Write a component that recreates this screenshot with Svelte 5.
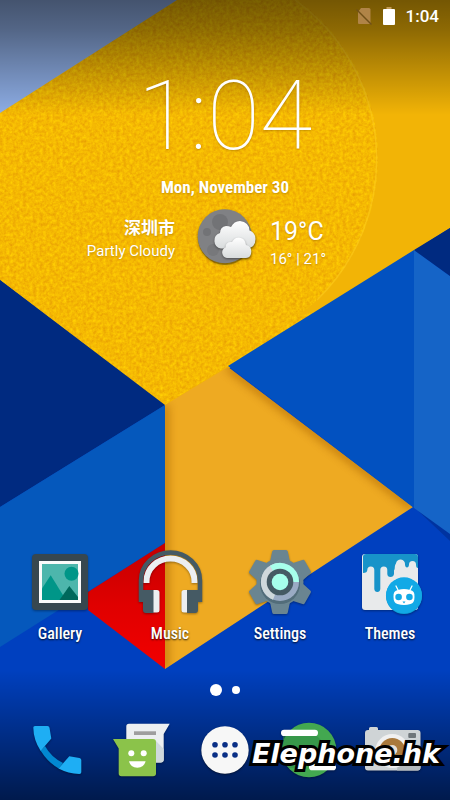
<script lang="ts">
	type Launcher = { id: string; label: string };

	const apps: Launcher[] = [
		{ id: 'gallery', label: 'Gallery' },
		{ id: 'music', label: 'Music' },
		{ id: 'settings', label: 'Settings' },
		{ id: 'themes', label: 'Themes' }
	];

	const dock: Launcher[] = [
		{ id: 'phone', label: 'Phone' },
		{ id: 'messages', label: 'Messages' },
		{ id: 'drawer', label: 'All apps' },
		{ id: 'files', label: 'Files' },
		{ id: 'camera', label: 'Camera' }
	];

	const pages = [0, 1];
	let page = $state(0);

	const time = '1:04';
	const teeth = [0, 60, 120, 180, 240, 300];
	const drawerDots = [22, 32, 42];
</script>

{#snippet icon(id: string)}
	<svg class="icon" viewBox="0 0 64 64" aria-hidden="true">
		{#if id === 'gallery'}
			<rect x="4" y="4" width="56" height="56" rx="4" fill="#37474f" />
			<rect x="11" y="11" width="42" height="42" fill="#fafafa" />
			<rect x="14" y="14" width="36" height="36" fill="#4db6ac" />
			<circle cx="43.5" cy="23.7" r="7" fill="#009688" />
			<path d="M14 38.5 22.7 25.3 38 50H14z" fill="#009688" />
			<path d="M31.5 50 41.3 36 50 47v3z" fill="#00695c" />
		{:else if id === 'music'}
			<path d="M8.500 33V31.500a24 23 0 0 1 48 0V33" fill="none" stroke="#eceff1" stroke-width="6" />
			<path d="M3 52V30.500a29.500 28 0 0 1 59 0V52" fill="none" stroke="#455a64" stroke-width="4.500" />
			<path d="M15 40h4q2.500 0 2.500 2.500V60q0 2.500-2.500 2.500h-4zM50 40h-4q-2.500 0-2.500 2.500V60q0 2.500 2.500 2.500h4z" fill="#eceff1" />
			<path d="M5 40h10.500v23H8q-3 0-3-3zM49 40h11v20q0 3-3 3h-8z" fill="#455a64" />
		{:else if id === 'settings'}
			<g fill="#6a8591">
				{#each teeth as angle}
					<path d="M26 0h12q1.500 0 1.800 1.500L42 12H22l2.200-10.500Q24.500 0 26 0z" transform="rotate({angle} 32 32)" />
				{/each}
				<circle cx="32" cy="32" r="23.500" />
			</g>
			<circle cx="32" cy="34" r="20" fill="#526d7a" />
			<circle cx="32" cy="32" r="19" fill="#9aabc4" />
			<path d="M32 32 25 49.700A19 19 0 0 1 32 13z" fill="#cfd8dc" />
			<path d="M32 32 22 15.800A19 19 0 0 1 51 32z" fill="#a7ffeb" />
			<circle cx="32" cy="32" r="13.300" fill="#455a64" />
			<circle cx="32" cy="32" r="8.300" fill="#a7ffeb" />
		{:else if id === 'themes'}
			<rect x="4" y="4" width="56" height="56" rx="3" fill="#e8eaeb" />
			<path
				d="M7 4h50q3 0 3 3v11q-2 0-2-3.500a3.500 3.500 0 0 0-7 0c0 4-4 4-4 0a4 4 0 0 0-9-1c-2 3-.5 5-2 7V24q-.5 3-3.500 3t-3.200-3V20a3.500 3.500 0 0 0-7 0V39q-.3 3-3 3t-3-3V20a3.500 3.500 0 0 0-7 0q0 3-4.300 3V7q0-3 3-3z"
				fill="#1793c9"
			/>
			<circle cx="46" cy="46" r="18" fill="#0c9bd4" />
			<circle cx="46" cy="45.300" r="18" fill="#12a9e6" />
			<path d="m38 36 2.500 5M54 36l-2.500 5" stroke="#fff" stroke-width="1.300" stroke-linecap="round" />
			<path d="M40 40q6-2 12 0 5 .5 4.500 7 0 6-4 7-6.500 2-13 0-4-1-4-7-.5-6.500 4.500-7z" fill="#fff" />
			<circle cx="40.600" cy="47" r="3.300" fill="#12a9e6" />
			<circle cx="51.400" cy="47" r="3.300" fill="#12a9e6" />
			<path d="M44.500 51.500h3L46 53.500z" fill="#12a9e6" />
		{:else if id === 'phone'}
			<path d="M15.700 32.700 20 28Q26 39 38 45l-4.300 5.500Q23 44.500 15.700 32.700z" fill="#0288d1" />
			<path d="M10 8h12.500q1.700 0 2 1.800l1.800 10.700L15.700 33Q8.500 22 8.300 9.500 8.300 8 10 8z" fill="#1eaef4" />
			<path d="M33.500 50.500 44.300 38.300 54.500 40q1.800.3 1.800 2v12.300q0 1.700-2 1.700-11-.3-20.800-5.500z" fill="#1eaef4" />
		{:else if id === 'messages'}
			<path d="M20 5.700h40.700l-6 10.300v25.500q0 3-3 3H20q-2.700 0-2.700-3v-33q0-2.800 2.700-2.800z" fill="#eceff1" />
			<path d="M25 13.300h22V17H25z" fill="#9e9e9e" />
			<path d="M47 23 54.700 31v10.500q0 3-3 3H47z" fill="#cfd8dc" />
			<path d="M4 21h40q3 0 3 3v31.500q0 2.800-3 2.800H12.500q-2.800 0-2.800-2.800V30.500z" fill="#8bc34a" />
			<circle cx="22.300" cy="35.300" r="3" fill="#fff" />
			<circle cx="34.700" cy="35.300" r="3" fill="#fff" />
			<path d="M20 43.300h16.600q-1.600 6.400-8.300 6.400T20 43.300z" fill="#fff" />
		{:else if id === 'drawer'}
			<circle cx="32" cy="32.700" r="23.700" fill="#000" opacity=".3" />
			<circle cx="32" cy="32" r="23.700" fill="#f7f7f7" />
			{#each drawerDots as x}
				<circle cx={x} cy="26.800" r="2.800" fill="#0a2f86" />
				<circle cx={x} cy="37" r="2.800" fill="#0a2f86" />
			{/each}
		{:else if id === 'files'}
			<circle cx="32" cy="32" r="27.300" fill="#43a850" />
			<path d="M6 18h34l14 14H40L27 50H11.500A27.300 27.300 0 0 1 6 24z" fill="#2e8b45" opacity=".55" />
			<rect x="4" y="11.700" width="37" height="6.300" rx="3.100" fill="#fff" />
			<rect x="32" y="46" width="27" height="6.300" rx="3.100" fill="#fff" />
		{:else}
			<path d="M8 12v-1.500Q8 9 9.500 9h6q1.500 0 1.500 1.500V12h39.500q3 0 3 3v34.500q0 3-3 3H7q-3 0-3-3V15q0-3 3-3z" fill="#cfd4d6" />
			<path d="M40 20 59.500 36v13.500q0 3-3 3H36z" fill="#b4babd" />
			<rect x="47.300" y="15" width="7.700" height="5" rx="1" fill="#6f767a" />
			<circle cx="31.300" cy="33" r="17" fill="#f0f0f0" />
			<circle cx="31.300" cy="33" r="13" fill="#a9793c" />
			<circle cx="31.300" cy="32" r="5" fill="#e8e0d8" />
		{/if}
	</svg>
{/snippet}

<main class="screen">
	<svg class="wallpaper" viewBox="0 0 450 800" preserveAspectRatio="xMidYMid slice" aria-hidden="true">
		<defs>
			<filter id="felt" x="0" y="0" width="100%" height="100%" color-interpolation-filters="sRGB">
				<feTurbulence type="fractalNoise" baseFrequency=".3" numOctaves="3" seed="4" result="noise" />
				<feColorMatrix
					in="noise"
					values="0.12 0 0 0 0.9  0.25 0 0 0 0.6  0 0 0 0 0.01  0 0 0 0 1"
				/>
				<feComposite in2="SourceGraphic" operator="in" />
			</filter>
			<filter id="soft" x="-20%" y="-20%" width="140%" height="140%">
				<feGaussianBlur stdDeviation="4" />
			</filter>
			<clipPath id="disc"><circle cx="182" cy="158" r="196" /></clipPath>
			<clipPath id="kite"><path d="M165 405 228 367 413 507 165 669z" /></clipPath>
			<linearGradient id="topShade" x1="0" y1="0" x2="0" y2="1">
				<stop offset="0" stop-opacity=".52" />
				<stop offset=".25" stop-opacity=".42" />
				<stop offset="1" stop-opacity="0" />
			</linearGradient>
			<linearGradient id="bottomShade" x1="0" y1="0" x2="0" y2="1">
				<stop offset="0" stop-opacity="0" />
				<stop offset="1" stop-opacity=".6" />
			</linearGradient>
			<linearGradient id="redFace" x1="0" y1="0" x2="0" y2="1">
				<stop offset="0" stop-color="#c40000" />
				<stop offset=".5" stop-color="#e00000" />
				<stop offset="1" stop-color="#f20000" />
			</linearGradient>
		</defs>
		<path d="M0 0h450v800H0z" fill="#0040bf" />
		<path d="M0 0h450v228L228 369 165 406 0 280z" fill="#f2b406" />
		<g clip-path="url(#disc)">
			<path d="M0 0h450v228L165 405 0 280z" filter="url(#felt)" />
		</g>
		<path d="M0 200V280L165 405 318 310 170 354z" filter="url(#felt)" />
		<path d="M295 0A196 196 0 0 1 317 300" fill="none" stroke="#fbc81a" stroke-width="1.500" opacity=".7" />
		<path d="M0 0h177L0 113z" fill="#8eaee6" />
		<path d="M0 280 165 405 0 507z" fill="#002a80" />
		<path d="M0 507 165 405V543L0 647z" fill="#0558bc" />
		<path d="M165 543V669L88 610V592z" fill="url(#redFace)" />
		<path d="M165 405 228 367 413 507 165 669z" fill="#eeaa22" />
		<g clip-path="url(#kite)">
			<path d="M228 367 413 507M165 405V669" stroke="#a86200" stroke-width="7" opacity=".65" filter="url(#soft)" />
		</g>
		<path d="M414 507 450 533V541z" fill="#002c8c" opacity=".6" />
		<path d="M228 366 414 250V508z" fill="#0251c0" />
		<path d="M414 250 450 276V534L414 508z" fill="#1564c7" />
		<path d="M414 250 450 228V276z" fill="#002a80" />
		<path d="M0 0h450v115H0z" fill="url(#topShade)" />
		<path d="M0 670h450v130H0z" fill="url(#bottomShade)" />
	</svg>

	<header class="status">
		<svg width="16" height="18" viewBox="0 0 16 18" role="img" aria-label="No SIM">
			<path d="M5 1h8q1.500 0 1.500 1.500V16q0 1-1 1H3q-1 0-1-1V5z" fill="#b08447" />
			<path d="M.5 2.500 15.500 17.500" stroke="#705018" stroke-width="1.500" />
		</svg>
		<svg width="12" height="18" viewBox="0 0 12 18" role="img" aria-label="Battery">
			<path d="M3.500 0h5v2h-5z" fill="#c49c58" />
			<rect y="2" width="12" height="16" rx="1" fill="#fff" />
		</svg>
		<time>{time}</time>
	</header>

	<section class="widget">
		<time class="clock">{time}</time>
		<p class="date">Mon, November 30</p>
		<div class="weather">
			<div class="place">
				<p class="city">深圳市</p>
				<p class="detail">Partly Cloudy</p>
			</div>
			<svg class="icon" viewBox="0 0 64 64" aria-hidden="true">
				<defs>
					<linearGradient id="cloud" x1="0" y1="0" x2="0" y2="1">
						<stop offset="0" stop-color="#fff" />
						<stop offset="1" stop-color="#d9dcdd" />
					</linearGradient>
				</defs>
				<circle cx="31" cy="33" r="27" fill="#000" opacity=".25" />
				<circle cx="30.700" cy="31.300" r="27" fill="#808184" />
				<circle cx="26" cy="17" r="8" fill="#727376" />
				<circle cx="13" cy="27" r="4" fill="#727376" />
				<circle cx="19" cy="45" r="6" fill="#77787b" />
				<g class="cloud" fill="url(#cloud)">
					<path d="M27 43.500a8 8 0 0 1-1-15.500q0-6 6-7 3 0 5 1 3-6 9-6 9 1 9.500 9.500 6 2 6 8.500 0 9-9 9.500z" />
				</g>
				<g class="cloud" fill="url(#cloud)">
					<path d="M33 53a5.500 5.500 0 0 1-1.500-10.500q0-6 6.500-5.500 3-5 8-4.300 5 .5 6 7.300 5.300 1 5.300 6.500 0 6-5.300 6.500z" />
				</g>
			</svg>
			<div class="temps">
				<p class="now">19°C</p>
				<p class="range">16° | 21°</p>
			</div>
		</div>
	</section>

	<nav class="apps" aria-label="Apps">
		{#each apps as app (app.id)}
			<button class="app">
				{@render icon(app.id)}
				<span>{app.label}</span>
			</button>
		{/each}
	</nav>

	<div class="pages">
		{#each pages as index}
			<button
				class="page"
				class:current={page === index}
				aria-label="Page {index + 1}"
				onclick={() => (page = index)}
			></button>
		{/each}
	</div>

	<footer class="dock">
		{#each dock as app (app.id)}
			<button class="app" aria-label={app.label}>
				{@render icon(app.id)}
			</button>
		{/each}
		<span class="watermark">Elephone.hk</span>
	</footer>
</main>

<style>
	:global(body) {
		margin: 0;
		background: #0040bf;
	}

	.screen {
		position: relative;
		display: flex;
		flex-direction: column;
		min-height: 100vh;
		overflow: hidden;
		color: #fff;
		font-family: Roboto, "Noto Sans CJK SC", sans-serif;
	}

	.wallpaper {
		position: absolute;
		inset: 0;
		z-index: -1;
		width: 100%;
		height: 100%;
	}

	p {
		margin: 0;
	}

	button {
		padding: 0;
		border: 0;
		background: none;
		color: inherit;
		cursor: pointer;
	}

	.icon {
		display: block;
		width: 64px;
		height: 64px;
		overflow: visible;
		filter: drop-shadow(0 1px 1px rgba(0, 0, 0, 0.35));
	}

	.status {
		display: flex;
		justify-content: flex-end;
		align-items: center;
		gap: 11px;
		height: 32px;
		padding-right: 11px;
		font-size: 17px;
		font-weight: 500;
	}

	.widget {
		display: flex;
		flex-direction: column;
		align-items: center;
		padding-top: 36px;
		text-shadow: 0 1px 2px rgba(120, 80, 0, 0.4);
	}

	.clock {
		font-size: 96px;
		font-weight: 100;
		line-height: 96px;
	}

	.date {
		margin-top: 13px;
		font-family: "Roboto Condensed", "Liberation Sans Narrow", Roboto, sans-serif;
		font-size: 17px;
		font-weight: 700;
		line-height: 20px;
	}

	.weather {
		display: grid;
		grid-template-columns: 1fr 64px 1fr;
		gap: 12px;
		align-items: start;
		box-sizing: border-box;
		width: 100%;
		margin-top: 8px;
		padding-left: 2px;
	}

	.place,
	.temps {
		padding-top: 11px;
	}

	.place {
		padding-right: 7px;
		text-align: right;
	}

	.city {
		font-size: 17px;
		font-weight: 700;
		line-height: 24px;
	}

	.detail,
	.range {
		font-size: 15px;
		line-height: 22px;
	}

	.now {
		font-size: 25px;
		line-height: 32px;
	}

	.cloud {
		filter: drop-shadow(0 1px 1px rgba(0, 0, 0, 0.4));
	}

	.apps {
		display: grid;
		grid-template-columns: repeat(4, 1fr);
		margin-top: auto;
		padding: 0 5px;
	}

	.app {
		display: flex;
		flex-direction: column;
		align-items: center;
		gap: 10px;
		font-family: "Roboto Condensed", "Liberation Sans Narrow", Roboto, sans-serif;
		font-size: 16px;
		font-weight: 500;
		line-height: 20px;
		text-shadow: 0 1px 2px rgba(0, 0, 0, 0.8);
	}

	.pages {
		display: flex;
		justify-content: center;
		align-items: center;
		gap: 10px;
		height: 12px;
		margin: 40px 0 22px;
	}

	.page {
		width: 8px;
		height: 8px;
		border-radius: 50%;
		background: #fff;
	}

	.page.current {
		width: 12px;
		height: 12px;
	}

	.dock {
		position: relative;
		display: grid;
		grid-template-columns: repeat(5, 1fr);
		padding: 0 15px 18px;
	}

	.watermark {
		position: absolute;
		top: 22px;
		right: 10px;
		font-family: "DejaVu Sans", sans-serif;
		font-size: 27px;
		font-style: italic;
		font-weight: 700;
		line-height: 28px;
		-webkit-text-stroke: 6px #000;
		paint-order: stroke fill;
		pointer-events: none;
	}
</style>
